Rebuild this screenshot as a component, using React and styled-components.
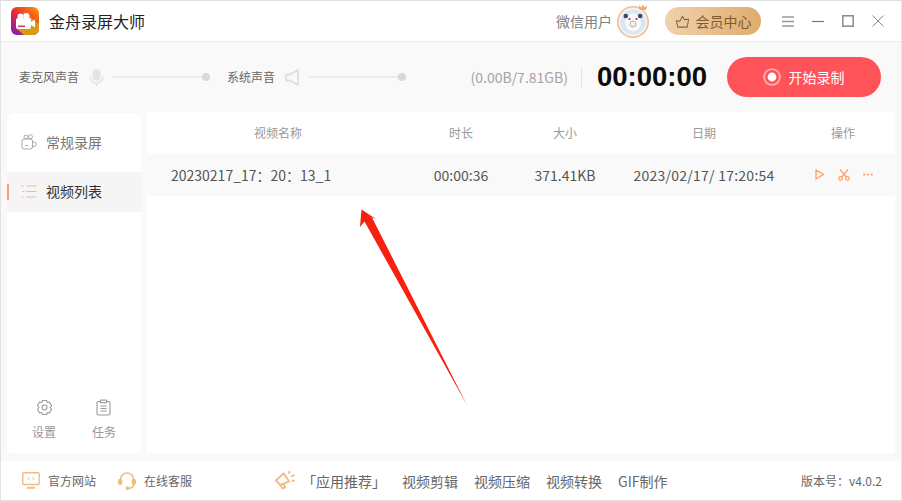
import React from "react";
import styled, { createGlobalStyle } from "styled-components";

const FONT = `"Noto Sans CJK SC", "Noto Sans", sans-serif`;

const GlobalStyle = createGlobalStyle`
  html, body {
    margin: 0;
    padding: 0;
    background: #fff;
  }
  * {
    box-sizing: border-box;
  }
`;

const Window = styled.div`
  position: relative;
  width: 902px;
  height: 502px;
  display: flex;
  flex-direction: column;
  overflow: hidden;
  background: #f9f9f9;
  border-top: 1px solid #dedede;
  border-left: 1px solid #e2e2e2;
  border-right: 1px solid #e8e8e8;
  border-bottom: 2px solid #dedede;
  font-family: ${FONT};
`;

const TitleBar = styled.header`
  height: 41px;
  flex: none;
  display: flex;
  align-items: center;
  padding: 0 17px 0 10px;
  background: #fff;
  border-bottom: 1px solid #ececec;
`;

const AppName = styled.h1`
  margin: 0 0 0 10px;
  font-size: 16px;
  font-weight: 400;
  color: #222;
`;

const UserName = styled.span`
  margin-left: auto;
  font-size: 14px;
  color: #808080;
`;

const Avatar = styled.div`
  width: 33px;
  height: 34px;
  margin: 0 15px 0 5px;
`;

const VipButton = styled.div`
  width: 96px;
  height: 28px;
  display: flex;
  align-items: center;
  justify-content: center;
  gap: 6px;
  border-radius: 14px;
  background: linear-gradient(90deg, #f0d2ad, #dfac6c);
  color: #7d5a32;
  font-size: 14px;
`;

const WindowControls = styled.div`
  display: flex;
  align-items: center;
  gap: 18px;
  margin-left: 21px;
  svg {
    display: block;
  }
`;

const Toolbar = styled.section`
  height: 70px;
  flex: none;
  display: flex;
  align-items: center;
  padding: 0 20px 0 18px;
`;

const SoundLabel = styled.span`
  font-size: 12px;
  color: #666;
  white-space: nowrap;
  margin-top: -2px;
`;

const SoundGroup = styled.div`
  display: flex;
  align-items: center;
  width: ${(p) => p.$width}px;
  margin-left: ${(p) => p.$left || 0}px;
  svg {
    flex: none;
    margin-left: 10px;
  }
`;

const Slider = styled.div`
  position: relative;
  flex: 1;
  height: 2px;
  margin-left: 8px;
  background: #ececec;
  &::after {
    content: "";
    position: absolute;
    right: 0;
    top: -3px;
    width: 8px;
    height: 8px;
    border-radius: 50%;
    background: #d9d9d9;
  }
`;

const Storage = styled.span`
  margin-left: auto;
  font-size: 14px;
  color: #a3a3a3;
`;

const Divider = styled.div`
  width: 1px;
  height: 20px;
  margin: 0 15px 0 13px;
  background: #e4e4e4;
`;

const Timer = styled.div`
  font-family: "Liberation Sans", Arial, sans-serif;
  font-size: 27.5px;
  font-weight: 700;
  color: #0c0c0c;
  margin-right: 20px;
`;

const RecordButton = styled.button`
  width: 154px;
  height: 40px;
  display: flex;
  align-items: center;
  justify-content: center;
  gap: 9px;
  padding: 0;
  border: 0;
  border-radius: 20px;
  background: #ff5359;
  color: #fff;
  font-family: ${FONT};
  font-size: 14px;
`;

const RecordDot = styled.span`
  width: 16px;
  height: 16px;
  border-radius: 50%;
  background: #fff;
  border: 3px solid #ff5359;
  box-shadow: 0 0 0 2px #ffb3b5;
  transform: scale(0.88);
`;

const Body = styled.div`
  flex: 1;
  min-height: 0;
  display: flex;
  gap: 6px;
  padding: 0 6px;
`;

const Sidebar = styled.nav`
  width: 134px;
  height: 340px;
  margin-top: 1px;
  display: flex;
  flex-direction: column;
  padding-top: 10px;
  background: #fff;
  border-radius: 8px 8px 4px 4px;
`;

const NavItem = styled.div`
  position: relative;
  height: 40px;
  display: flex;
  align-items: center;
  gap: 9px;
  margin-bottom: ${(p) => p.$gap || 0}px;
  padding: 0 0 2px 14px;
  background: ${(p) => (p.$active ? "#f5f5f5" : "transparent")};
  color: ${(p) => (p.$active ? "#333" : "#777")};
  font-size: 14px;
  ${(p) =>
    p.$active &&
    `&::before {
      content: "";
      position: absolute;
      left: 0;
      top: 12px;
      width: 2px;
      height: 16px;
      background: #ff9e63;
    }`}
`;

const SideTools = styled.div`
  margin-top: auto;
  display: flex;
  justify-content: space-between;
  padding: 0 25px 13px 25px;
`;

const SideTool = styled.div`
  display: flex;
  flex-direction: column;
  align-items: center;
  gap: 7px;
  font-size: 12px;
  color: #9a9a9a;
  svg {
    height: 17px;
  }
`;

const Main = styled.main`
  width: 748px;
  height: 341px;
  background: #fff;
`;

const columns = "262px 104px 104px 174px 1fr";

const HeadRow = styled.div`
  height: 42px;
  padding-bottom: 2px;
  display: grid;
  grid-template-columns: ${columns};
  align-items: center;
  font-size: 12px;
  color: #999;
  text-align: center;
`;

const FileRow = styled.div`
  height: 42px;
  padding-bottom: 1px;
  display: grid;
  grid-template-columns: ${columns};
  align-items: center;
  background: #f9f9f9;
  border-radius: 4px;
  font-size: 14px;
  color: #555;
  text-align: center;
`;

const FileName = styled.span`
  padding-left: 24px;
  text-align: left;
  white-space: nowrap;
`;

const DateCell = styled.span`
  letter-spacing: 0.25px;
  white-space: nowrap;
`;

const RowActions = styled.div`
  display: flex;
  align-items: center;
  justify-content: center;
  gap: 13px;
  padding-left: 2px;
  svg {
    display: block;
  }
`;

const Footer = styled.footer`
  height: 39px;
  flex: none;
  margin-top: 7px;
  display: flex;
  align-items: center;
  padding: 0 19px 0 21px;
  background: #fff;
  font-size: 14px;
  color: #666;
`;

const ServiceLink = styled.span`
  display: flex;
  align-items: center;
  gap: 8px;
  margin-left: ${(p) => p.$left || 0}px;
  font-size: 12px;
  white-space: nowrap;
`;

const FooterLink = styled.span`
  display: flex;
  align-items: center;
  gap: ${(p) => p.$gap || 0}px;
  margin-left: ${(p) => p.$left || 0}px;
  white-space: nowrap;
`;

const Version = styled.span`
  margin-left: auto;
  font-size: 12px;
`;

const Arrow = styled.svg`
  position: absolute;
  left: -1px;
  top: -1px;
  pointer-events: none;
`;

const AppLogo = () => (
  <svg width="28" height="28" viewBox="0 0 28 28">
    <defs>
      <linearGradient id="logoBg" x1="0" y1="1" x2="1" y2="0">
        <stop offset="0" stopColor="#6d1fc0" />
        <stop offset="0.45" stopColor="#e4283c" />
        <stop offset="0.8" stopColor="#fb6a14" />
        <stop offset="1" stopColor="#fda50f" />
      </linearGradient>
    </defs>
    <rect width="28" height="28" rx="6" fill="url(#logoBg)" />
    <path d="M13 5l15 12v5a6 6 0 0 1-6 6h-9L5 21z" fill="#d99a12" />
    <circle cx="9.500" cy="9.500" r="3" fill="#fff" />
    <circle cx="15.500" cy="9" r="3" fill="#fff" />
    <rect x="5" y="11" width="15" height="11" rx="2" fill="#fff" />
    <path d="M20 15l4-2.500v8L20 18z" fill="#fff" />
    <rect x="7" y="18.500" width="7" height="1.600" fill="#d2386a" />
  </svg>
);

const PandaAvatar = () => (
  <svg width="33" height="34" viewBox="0 0 33 34">
    <circle cx="16" cy="18" r="15.200" fill="#f8f3ea" stroke="#f0bd94" strokeWidth="1.600" />
    <circle cx="16" cy="18" r="12.500" fill="#d5e8f7" />
    <ellipse cx="16" cy="18.500" rx="8" ry="9" fill="#fbf8f2" />
    <circle cx="8.800" cy="12" r="2.300" fill="#4b3f6b" />
    <circle cx="23.200" cy="12" r="2.300" fill="#4b3f6b" />
    <circle cx="12.500" cy="15" r="1" fill="#4b3f6b" />
    <circle cx="19.500" cy="15" r="1" fill="#4b3f6b" />
    <circle cx="16" cy="20" r="3" fill="#eef2f5" stroke="#b4b0b4" />
    <path d="M22.500 6l-.8-5 2.600 2.500 1.800-3 1.500 3 2.700-2-1.300 4.500z" fill="#f0a878" />
  </svg>
);

const Crown = () => (
  <svg width="15" height="15" viewBox="0 0 16 15" fill="none" stroke="#8a6434" strokeWidth="1.100">
    <path d="M1.500 6.500l3.500 1L8 2l2 3.500 4.500-.5-1.500 8.500H3z" strokeLinejoin="round" />
  </svg>
);

const MenuIcon = () => (
  <svg width="12" height="11" viewBox="0 0 12 11" stroke="#999" strokeWidth="1.400">
    <path d="M0 1h12M0 5.500h12M0 10h12" />
  </svg>
);

const MinIcon = () => (
  <svg width="12" height="12" viewBox="0 0 12 12" stroke="#777" strokeWidth="1.200">
    <path d="M0 6.500h12" />
  </svg>
);

const MaxIcon = () => (
  <svg width="12" height="12" viewBox="0 0 12 12" fill="none" stroke="#8a8a8a" strokeWidth="1.500">
    <rect x=".8" y=".8" width="10.400" height="10.400" />
  </svg>
);

const CloseIcon = () => (
  <svg width="12" height="12" viewBox="0 0 12 12" stroke="#888" strokeWidth="1">
    <path d="M.5.500l11 11M11.500.500l-11 11" />
  </svg>
);

const MicIcon = () => (
  <svg width="15" height="17" viewBox="0 0 15 17" fill="none" stroke="#e3e3e3" strokeWidth="1.600">
    <rect x="4.200" y="1" width="6.600" height="10" rx="3.300" fill="#e3e3e3" />
    <path d="M1 7.500a6.500 6.500 0 0 0 13 0M7.500 14v3" />
  </svg>
);

const SpeakerIcon = () => (
  <svg width="16" height="17" viewBox="0 0 16 17" fill="none" stroke="#dedede" strokeWidth="1.800">
    <path d="M1 5.500h4L13 1v15l-8-4.500H1z" strokeLinejoin="round" />
  </svg>
);

const CameraIcon = () => (
  <svg width="16" height="16" viewBox="0 0 16 16" fill="none" stroke="#aaa" strokeWidth="1">
    <circle cx="5" cy="3" r="2" />
    <circle cx="9.500" cy="2.800" r="2" />
    <rect x="1" y="5" width="10.500" height="10" rx="2" />
    <path d="M11.500 8h1.500a2 2 0 0 1 0 4.500h-1.500M4 11.500h3" />
  </svg>
);

const ListIcon = () => (
  <svg width="16" height="13" viewBox="-.5 0 16 13" fill="none" stroke="#ffb48a" strokeWidth="1.200">
    <path d="M0 1h2M5 1h10M1 6.500h2M5 6.500h10M0 12h2M5 12h10" />
  </svg>
);

const GearIcon = () => (
  <svg width="17" height="17" viewBox="0 0 24 24" fill="none" stroke="#999" strokeWidth="1.500">
    <path d="M9 2h6l1 3 3-.7 3 5.200-2.200 2.500 2.200 2.500-3 5.200-3-.7-1 3H9l-1-3-3 .7-3-5.200L4.200 12 2 9.500l3-5.200 3 .7z" strokeLinejoin="round" />
    <circle cx="12" cy="12" r="3.500" />
  </svg>
);

const TaskIcon = () => (
  <svg width="15" height="17" viewBox="0 0 15 16" fill="none" stroke="#999" strokeWidth="1.100">
    <rect x="1" y="2" width="13" height="13.500" rx="1.500" />
    <rect x="4.500" y=".6" width="6" height="2.500" fill="#fff" />
    <path d="M4.500 6.500h6M4.500 9h6M4.500 11.500h6" />
  </svg>
);

const PlayIcon = () => (
  <svg width="10" height="11" viewBox="0 0 10 11" fill="none" stroke="#ff9e63" strokeWidth="1.300">
    <path d="M1 1l7.500 4.500L1 10z" strokeLinejoin="round" />
  </svg>
);

const ScissorsIcon = () => (
  <svg width="12" height="12" viewBox="0 0 12 12" fill="none" stroke="#ff9e63" strokeWidth="1.200">
    <circle cx="2.600" cy="9.400" r="1.800" />
    <circle cx="9.400" cy="9.400" r="1.800" />
    <path d="M3.600 8L10 .5M8.400 8L2 .5" />
  </svg>
);

const DotsIcon = () => (
  <svg width="10" height="3" viewBox="0 0 10 3" fill="#ff9e63">
    <circle cx="1.200" cy="1.500" r="1.100" />
    <circle cx="5" cy="1.500" r="1.100" />
    <circle cx="8.800" cy="1.500" r="1.100" />
  </svg>
);

const MonitorIcon = () => (
  <svg width="18" height="17" viewBox="0 0 18 17" fill="none" stroke="#edbd84" strokeWidth="1.400">
    <rect x=".8" y=".8" width="16.400" height="11.700" rx="1" />
    <path d="M5 15.800h8" strokeWidth="2" />
    <path d="M7.500 5L6 6.700l1.500 1.600M10.500 5L12 6.700l-1.500 1.600" strokeWidth="1" />
  </svg>
);

const HeadsetIcon = () => (
  <svg width="18" height="18" viewBox="0 0 18 18" fill="none" stroke="#edbd84" strokeWidth="1.500">
    <path d="M2.500 9V7.500a6.500 6.500 0 0 1 13 0V9" />
    <rect x=".8" y="7.500" width="2.800" height="5" rx="1.400" fill="#edbd84" />
    <rect x="14.400" y="7.500" width="2.800" height="5" rx="1.400" fill="#edbd84" />
    <path d="M15.500 12.500c0 2.500-2 3.800-5 3.800" />
    <circle cx="9.500" cy="16.300" r="1.200" fill="#edbd84" />
  </svg>
);

const HornIcon = () => (
  <svg width="21" height="21" viewBox="0 0 22 22" fill="none" stroke="#edbd84" strokeWidth="2">
    <path d="M10 3.500l6 8.500-9.500 3.500L2 11z" strokeLinejoin="round" />
    <path d="M6.500 15.500l2.500 4 2.700-1.600-2-3.400" strokeLinejoin="round" />
    <path d="M15.500 4l1-3M18 7l3.500-2M18.500 11l3 .5" />
  </svg>
);

export default function App() {
  return (
    <>
      <GlobalStyle />
      <Window>
        <TitleBar>
          <AppLogo />
          <AppName>金舟录屏大师</AppName>
          <UserName>微信用户</UserName>
          <Avatar>
            <PandaAvatar />
          </Avatar>
          <VipButton>
            <Crown />
            会员中心
          </VipButton>
          <WindowControls>
            <MenuIcon />
            <MinIcon />
            <MaxIcon />
            <CloseIcon />
          </WindowControls>
        </TitleBar>

        <Toolbar>
          <SoundGroup $width={191}>
            <SoundLabel>麦克风声音</SoundLabel>
            <MicIcon />
            <Slider />
          </SoundGroup>
          <SoundGroup $width={179} $left={17}>
            <SoundLabel>系统声音</SoundLabel>
            <SpeakerIcon />
            <Slider />
          </SoundGroup>
          <Storage>(0.00B/7.81GB)</Storage>
          <Divider />
          <Timer>00:00:00</Timer>
          <RecordButton>
            <RecordDot />
            开始录制
          </RecordButton>
        </Toolbar>

        <Body>
          <Sidebar>
            <NavItem $gap={9}>
              <CameraIcon />
              常规录屏
            </NavItem>
            <NavItem $active>
              <ListIcon />
              视频列表
            </NavItem>
            <SideTools>
              <SideTool>
                <GearIcon />
                设置
              </SideTool>
              <SideTool>
                <TaskIcon />
                任务
              </SideTool>
            </SideTools>
          </Sidebar>
          <Main>
            <HeadRow>
              <span>视频名称</span>
              <span>时长</span>
              <span>大小</span>
              <span>日期</span>
              <span>操作</span>
            </HeadRow>
            <FileRow>
              <FileName>20230217_17：20：13_1</FileName>
              <span>00:00:36</span>
              <span>371.41KB</span>
              <DateCell>2023/02/17/ 17:20:54</DateCell>
              <RowActions>
                <PlayIcon />
                <ScissorsIcon />
                <DotsIcon />
              </RowActions>
            </FileRow>
          </Main>
        </Body>

        <Footer>
          <ServiceLink>
            <MonitorIcon />
            官方网站
          </ServiceLink>
          <ServiceLink $left={22}>
            <HeadsetIcon />
            在线客服
          </ServiceLink>
          <FooterLink $gap={7} $left={82}>
            <HornIcon />
            「应用推荐」
          </FooterLink>
          <FooterLink $left={16}>视频剪辑</FooterLink>
          <FooterLink $left={16}>视频压缩</FooterLink>
          <FooterLink $left={16}>视频转换</FooterLink>
          <FooterLink $left={16}>GIF制作</FooterLink>
          <Version>版本号：v4.0.2</Version>
        </Footer>

        <Arrow width="902" height="502" viewBox="0 0 902 502">
          <path d="M361.500 209.500L376 219l-4-1.500L467.500 406 364.500 221.500 360 227z" fill="#f8200f" />
        </Arrow>
      </Window>
    </>
  );
}
